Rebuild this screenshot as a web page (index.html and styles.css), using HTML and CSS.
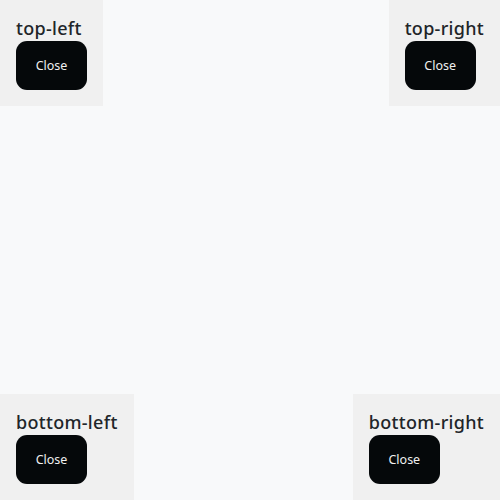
FILE: index.html
```html
<!DOCTYPE html>
<html>
<head>
<meta charset="utf-8">
<link rel="stylesheet" href="styles.css">
</head>
<body>
  <div class="panel top-left">
    <h2 class="title">top-left</h2>
    <button class="close">Close</button>
  </div>
  <div class="panel top-right">
    <h2 class="title">top-right</h2>
    <button class="close">Close</button>
  </div>
  <div class="panel bottom-left">
    <h2 class="title">bottom-left</h2>
    <button class="close">Close</button>
  </div>
  <div class="panel bottom-right">
    <h2 class="title">bottom-right</h2>
    <button class="close">Close</button>
  </div>
</body>
</html>
```
FILE: styles.css
```css
html, body {
  margin: 0;
  padding: 0;
  width: 500px;
  height: 500px;
  background: #f8f9fa;
  font-family: "Noto Sans", sans-serif;
}
.panel {
  position: fixed;
  background: #f0f0f0;
  padding: 16px;
  display: flex;
  flex-direction: column;
  align-items: flex-start;
}
.top-left { top: 0; left: 0; }
.top-right { top: 0; right: 0; }
.bottom-left { bottom: 0; left: 0; }
.bottom-right { bottom: 0; right: 0; }
.title {
  margin: 0;
  font-size: 18px;
  line-height: 25px;
  font-weight: 500;
  letter-spacing: 0.3px;
  color: #212529;
}
.close {
  width: 71px;
  height: 49px;
  border: none;
  border-radius: 11px;
  background: #05080a;
  color: #f0f0f0;
  font-family: "Noto Sans", sans-serif;
  font-size: 12.5px;
  padding: 0;
}
```
